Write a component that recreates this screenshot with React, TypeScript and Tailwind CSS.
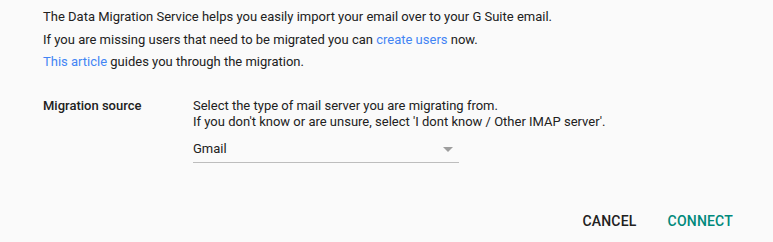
import React from "react";

const App: React.FC = () => {
  return (
    <div className="w-[773px] h-[242px] bg-[#fafafa] font-['Roboto',sans-serif] text-[13px] text-[#212121]">
      <div className="pl-[43px] pt-[6px] leading-[22.5px]">
        <p>The Data Migration Service helps you easily import your email over to your G Suite email.</p>
        <p>
          If you are missing users that need to be migrated you can{" "}
          <a className="text-[#4285f4]">create users</a> now.
        </p>
        <p>
          <a className="text-[#4285f4]">This article</a> guides you through the migration.
        </p>
      </div>

      <div className="flex pl-[43px] mt-[24px]">
        <div className="w-[150px] font-medium leading-[16px]">Migration source</div>
        <div className="flex flex-col">
          <p className="leading-[16.5px]">
            Select the type of mail server you are migrating from.
            <br />
            If you don't know or are unsure, select 'I dont know / Other IMAP server'.
          </p>
          <div className="mt-[6px] w-[266px] h-[26px] flex items-center justify-between border-b border-[#bdbdbd] pr-[6px]">
            <span>Gmail</span>
            <span className="w-0 h-0 border-l-[5px] border-r-[5px] border-t-[5px] border-l-transparent border-r-transparent border-t-[#9e9e9e]" />
          </div>
        </div>
      </div>

      <div className="flex justify-end items-center gap-[31px] pr-[40px] mt-[48px] text-[14px] font-medium tracking-[0.2px]">
        <button className="text-[#212121]">CANCEL</button>
        <button className="text-[#00897b]">CONNECT</button>
      </div>
    </div>
  );
};

export default App;
